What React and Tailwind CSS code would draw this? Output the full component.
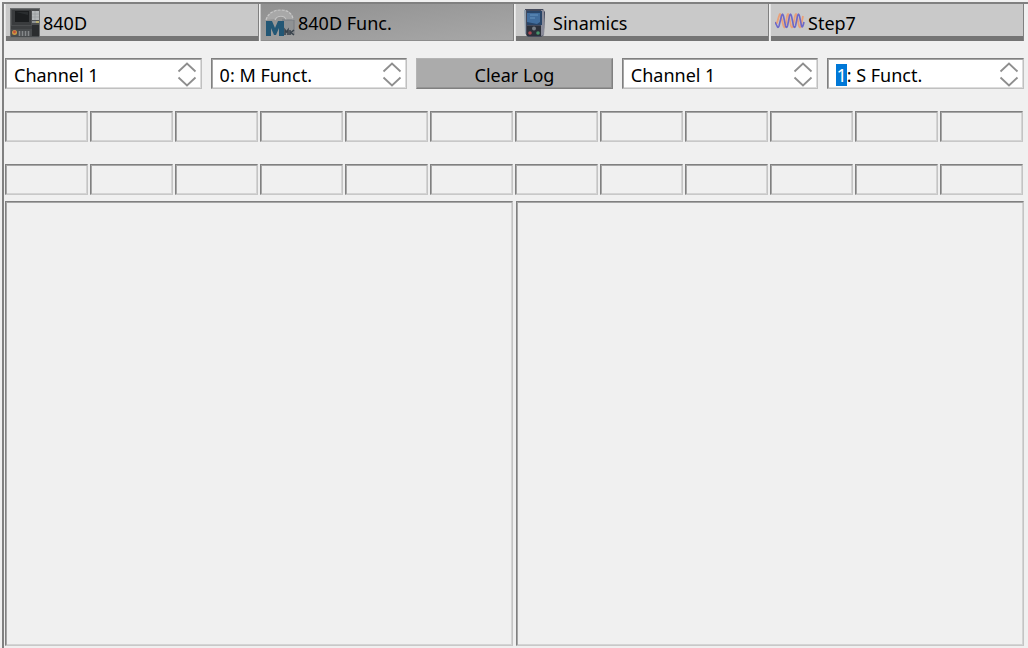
import { useEffect, useRef } from "react";

function PanelIcon() {
  return (
    <svg viewBox="0 0 30 30" className="size-[30px] shrink-0" aria-hidden="true">
      <rect x="0.5" y="0.5" width="29" height="29" fill="#4c4e50" stroke="#6c6e6f" />
      <rect x="2" y="2" width="19" height="15" fill="#3a3c3e" />
      <rect x="5" y="3" width="14" height="11" fill="#1c1e20" />
      <path d="M6 4h12v3z" fill="#2a2d2f" />
      <rect x="22" y="3" width="7" height="9" fill="#b4b8ba" />
      <path d="M22 6h7M22 9h7M25 3v9" stroke="#989c9e" strokeWidth="0.7" />
      <rect x="22" y="13" width="4" height="2" fill="#8f9395" />
      <rect x="26" y="13" width="3" height="2" fill="#b9ae70" />
      <rect x="1" y="18" width="28" height="3" fill="#3d3f41" />
      <rect x="1" y="21" width="28" height="8" fill="#484b4d" />
      <rect x="22" y="17" width="7" height="11" fill="#2b2d2f" />
      <circle cx="4.5" cy="24.500" r="2.5" fill="#c99a45" />
      <circle cx="4.5" cy="24" r="1.4" fill="#c4503c" />
      <path d="M9.500 23v5M12.500 23v5M15.500 23v5M18.500 23v5" stroke="#85888a" strokeWidth="1.600" />
    </svg>
  );
}

function MotorIcon() {
  return (
    <svg viewBox="0 0 30 30" className="size-[30px] shrink-0" aria-hidden="true">
      <path d="M1 12C3 5 9 2 16 2c7 0 12 4 12 10h-7c-1-5-9-6-11-1z" fill="#a8a8a8" />
      <path d="M1 12C3 5 9 2 16 2c7 0 12 4 12 10" fill="none" stroke="#c8c8c8" strokeWidth="1.200" strokeDasharray="3 1" />
      <path d="M10 12c2-5 10-5 11 0" fill="none" stroke="#c4c4c4" strokeWidth="1.200" />
      <rect x="17" y="12" width="12" height="15" fill="#8f9294" />
      <path d="M17 12h12v14" fill="none" stroke="#787d81" />
      <path d="M1 28V13h6l3 7 3-7h6v15h-5v-8l-3 7H9l-3-7v8z" fill="#235775" />
      <path d="M20 27v-5l1.500 2 1.500-2v5M25 22v5M29 22l-3 2.500 3 2.500" fill="none" stroke="#3a444d" strokeWidth="1.600" />
    </svg>
  );
}

function DriveIcon() {
  return (
    <svg viewBox="0 0 30 30" className="size-[30px] shrink-0" aria-hidden="true">
      <path d="M5 1l18 0 2 3-1 23-3 2H8l-2-2z" fill="#454a5c" />
      <path d="M21 2h3v25l-3 1z" fill="#8a8b99" />
      <path d="M4 2h2v24h-1z" fill="#92a0ad" />
      <rect x="7" y="3" width="15" height="14" fill="#294568" />
      <path d="M7 5h13v9l-3 2-10-2z" fill="#416d9d" />
      <path d="M10 7h8M10 10h5" stroke="#6695c0" />
      <rect x="7" y="18" width="14" height="10" fill="#2c303a" />
      <circle cx="14" cy="20.500" r="2" fill="#777d85" />
      <circle cx="10" cy="25" r="1.800" fill="#aa4650" />
      <circle cx="18" cy="25" r="1.800" fill="#47956b" />
    </svg>
  );
}

function WaveIcon() {
  return (
    <svg viewBox="0 0 30 30" className="size-[30px] shrink-0" fill="none" strokeLinejoin="round" aria-hidden="true">
      <path d="M0 15h2L4 8Q5 4 6 8L8.500 18Q9.500 21 10.500 18L12 8Q13 4 14 8L16 18Q17 21 18 18L20 8Q21 4 22 8L24 18Q25 21 26 18L28 8" stroke="#eaa078" strokeWidth="1.800" />
      <path d="M0 14l2 4Q3 21 4 18L6.500 8Q7.500 4 8.500 8L10.500 18Q11.500 21 12.500 18L14.500 8Q15.500 4 16.500 8L18.500 18Q19.500 21 20.500 18L22.500 8Q23.500 4 24.500 8L26.500 18Q27.500 21 29 14" stroke="#6c68c8" strokeWidth="1.600" />
    </svg>
  );
}

const tabs = [
  { label: "840D", Icon: PanelIcon },
  { label: "840D Func.", Icon: MotorIcon, active: true },
  { label: "Sinamics", Icon: DriveIcon },
  { label: "Step7", Icon: WaveIcon },
];

const sunken =
  "border border-t-[#808080] border-r-[#c4c4c4] border-b-[#c8c8c8] border-l-[#808080] shadow-[inset_1px_1px_0_#a6a6a6,inset_-1px_-1px_0_#d4d4d4]";

function Chevron({ down }) {
  return (
    <svg viewBox="0 0 20 11" className="h-[11px] w-5" fill="none" stroke="#8e8e8e" strokeWidth="1.800" aria-hidden="true">
      <path d={down ? "M1.500 1.500L10 9.500L18.500 1.500" : "M1.500 9.500L10 1.500L18.500 9.500"} />
    </svg>
  );
}

function SpinBox({ label, value, selectFirst }) {
  const ref = useRef(null);
  useEffect(() => {
    if (selectFirst) {
      ref.current.focus();
      ref.current.setSelectionRange(0, 1);
    }
  }, [selectFirst]);
  return (
    <div className="flex h-[31px] min-w-0 items-center border border-t-[#808080] border-r-[#c0c0c0] border-b-[#c0c0c0] border-l-[#808080] bg-white pt-0.5 pr-1 pl-2 shadow-[inset_1px_1px_0_#a6a6a6,inset_-1px_-1px_0_#dcdcdc]">
      <input
        ref={ref}
        aria-label={label}
        defaultValue={value}
        className="h-[22px] min-w-0 flex-1 bg-transparent leading-[22px] outline-none selection:bg-[#0078d7] selection:text-white"
      />
      <div className="flex flex-col gap-[3px]">
        <button type="button" aria-label={`${label} up`}><Chevron /></button>
        <button type="button" aria-label={`${label} down`}><Chevron down /></button>
      </div>
    </div>
  );
}

function CellRow() {
  return (
    <div className="grid grid-cols-12 gap-0.5 pr-px">
      {Array.from({ length: 12 }, (_, i) => (
        <div key={i} className={`h-[31px] ${sunken}`} />
      ))}
    </div>
  );
}

export default function App() {
  return (
    <div className="flex min-h-screen flex-col bg-[#f0f0f0] pt-0.5 pl-0.5 font-['Noto_Sans',sans-serif] text-[18px] text-black">
      <main className="flex flex-1 flex-col border-t-2 border-l-2 border-[#808080] pr-1 pb-0.5 pl-px">
        <div role="tablist" className="grid grid-cols-4 gap-px">
          {tabs.map(({ label, Icon, active }) => (
            <button
              key={label}
              role="tab"
              type="button"
              aria-selected={!!active}
              className={`flex h-[37px] items-center gap-[3px] border-r border-l border-r-[#808080] pl-1 ${
                active
                  ? "border-l-[#c8c8c8] bg-linear-to-br from-[#909090] to-[#a8a8a8] shadow-[inset_0_-1px_0_#8c8c8c]"
                  : "border-l-[#e4e4e4] bg-[#c9c9c9] shadow-[inset_0_-5px_0_#747474]"
              }`}
            >
              <Icon />
              <span className="pt-0.5">{label}</span>
            </button>
          ))}
        </div>
        <div className="mt-[17px] grid grid-cols-5 gap-[9px]">
          <SpinBox label="Left channel" value="Channel 1" />
          <SpinBox label="Left function" value="0: M Funct." />
          <button type="button" className="h-[31px] border border-t-[#b4b4b4] border-r-[#808080] border-b-[#808080] border-l-[#b4b4b4] bg-[#ababab] pt-0.5 leading-[22px] shadow-[inset_-1px_-1px_0_#949494]">
            Clear Log
          </button>
          <SpinBox label="Right channel" value="Channel 1" />
          <SpinBox label="Right function" value="1: S Funct." selectFirst />
        </div>
        <div className="mt-[22px] flex flex-col gap-[22px]">
          <CellRow />
          <CellRow />
        </div>
        <div className="mt-1.5 grid flex-1 grid-cols-2 gap-[3px]">
          <section aria-label="Left log" className={sunken} />
          <section aria-label="Right log" className={sunken} />
        </div>
      </main>
    </div>
  );
}
